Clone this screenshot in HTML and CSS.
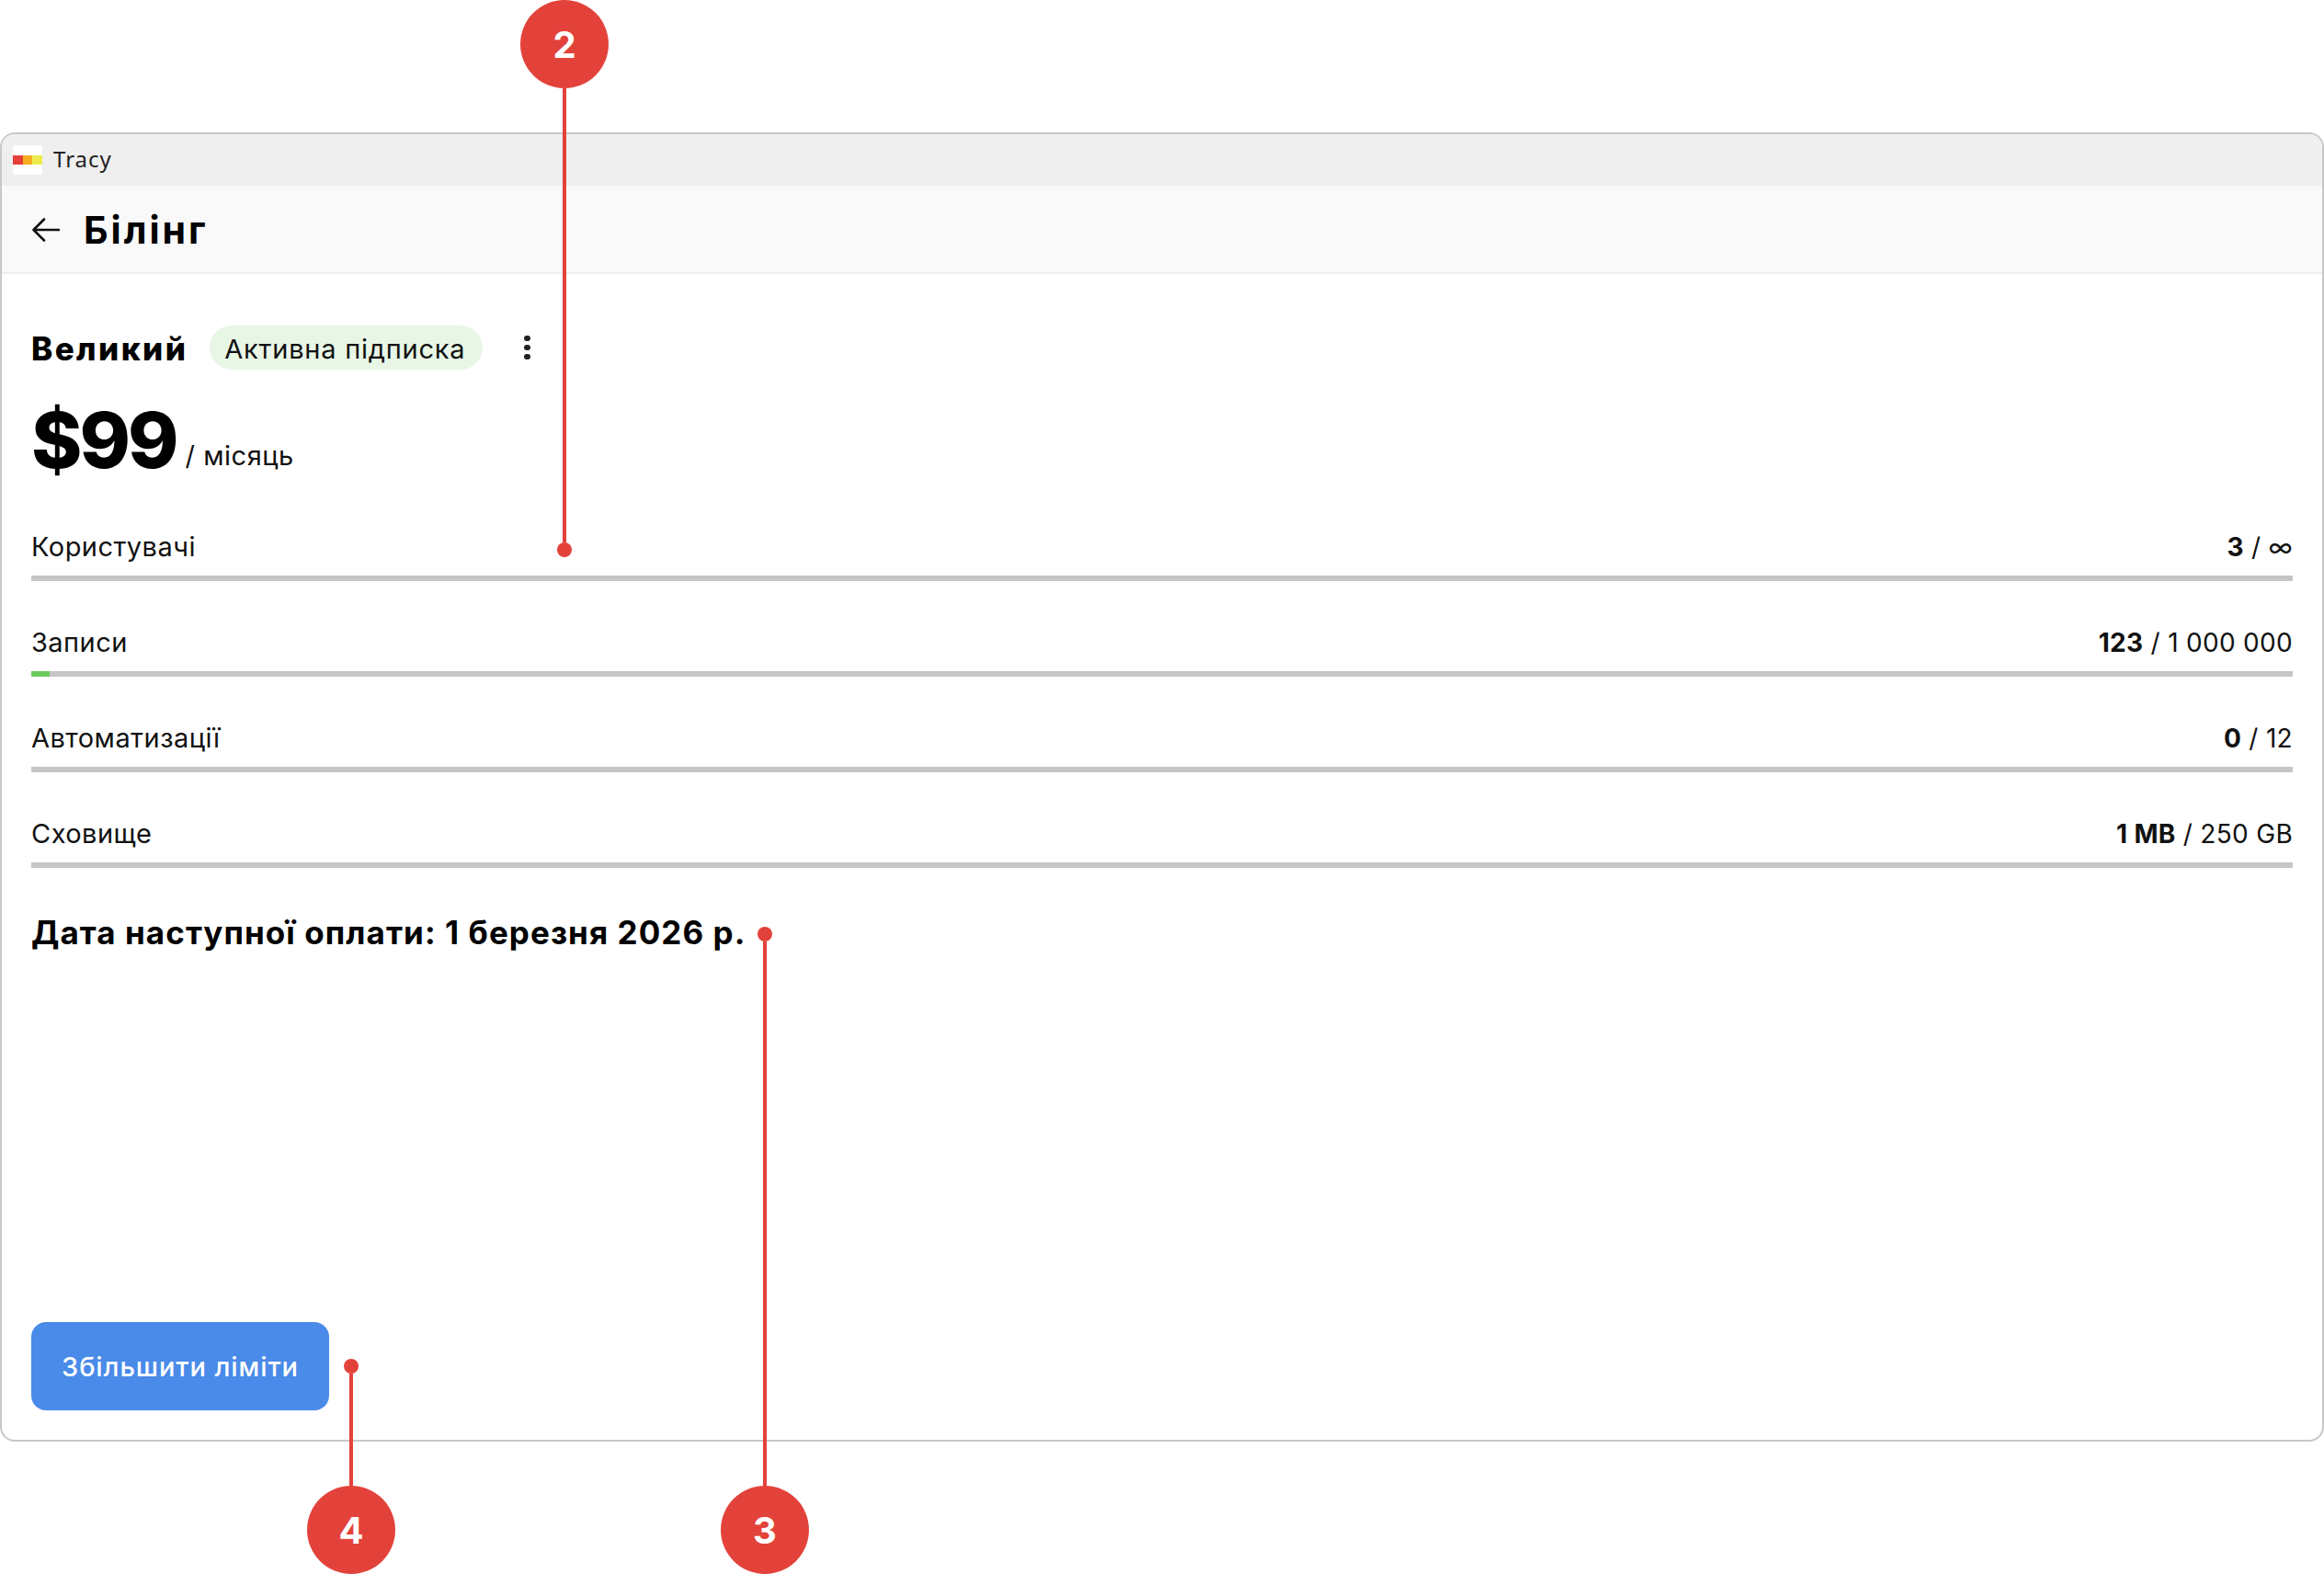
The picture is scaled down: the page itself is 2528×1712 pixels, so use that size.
FILE: index.html
```html
<!DOCTYPE html>
<html lang="uk">
<head>
<meta charset="utf-8">
<title>Tracy — Білінг</title>
<link rel="stylesheet" href="styles.css">
</head>
<body>
<div class="stage">
  <main class="window">
    <div class="titlebar">
      <div class="logo"><i class="s-red"></i><i class="s-orange"></i><i class="s-yellow"></i></div>
      <span class="app-name">Tracy</span>
    </div>
    <header class="header">
      <svg class="back" width="30" height="26" viewBox="0 0 30 26" fill="none" stroke="#111" stroke-width="2.6" stroke-linecap="round" stroke-linejoin="round"><path d="M29 13H2M13 1.5 1.5 13 13 24.5"/></svg>
      <h1 class="page-title">Білінг</h1>
    </header>
    <section class="content">
      <div class="plan-row">
        <h2 class="plan-name">Великий</h2>
        <span class="badge">Активна підписка</span>
        <div class="kebab"><i></i><i></i><i></i></div>
      </div>
      <div class="price-row">
        <span class="price">$99</span>
        <span class="period">/ місяць</span>
      </div>
      <div class="usage">
        <div class="usage-row">
          <div class="usage-text"><span>Користувачі</span><span class="value"><b>3</b> / ∞</span></div>
          <div class="bar"></div>
        </div>
        <div class="usage-row">
          <div class="usage-text"><span>Записи</span><span class="value"><b>123</b> / 1 000 000</span></div>
          <div class="bar"><div class="fill" style="width:20px"></div></div>
        </div>
        <div class="usage-row">
          <div class="usage-text"><span>Автоматизації</span><span class="value"><b>0</b> / 12</span></div>
          <div class="bar"></div>
        </div>
        <div class="usage-row">
          <div class="usage-text"><span>Сховище</span><span class="value"><b>1 MB</b> / 250 GB</span></div>
          <div class="bar"></div>
        </div>
      </div>
      <p class="next-pay">Дата наступної оплати: 1 березня 2026 р.</p>
      <button class="cta">Збільшити ліміти</button>
    </section>
  </main>

  <div class="callout c2"><span class="bubble">2</span><i class="line"></i><i class="dot"></i></div>
  <div class="callout c3"><i class="dot"></i><i class="line"></i><span class="bubble">3</span></div>
  <div class="callout c4"><i class="dot"></i><i class="line"></i><span class="bubble">4</span></div>
</div>
</body>
</html>
```

FILE: styles.css
```css
* { box-sizing: border-box; }
html, body { margin: 0; padding: 0; background: #fff; }
body { font-family: Inter, "Noto Sans", sans-serif; color: #000; }

.stage {
  position: relative;
  width: 2528px;
  height: 1712px;
  padding-top: 144px;
  overflow: hidden;
}

.window {
  display: flex;
  flex-direction: column;
  height: 1424px;
  border: 2px solid #c8c8c8;
  border-radius: 16px;
  overflow: hidden;
  background: #fff;
}

.titlebar {
  display: flex;
  align-items: center;
  gap: 12px;
  height: 56px;
  padding-left: 12px;
  background: #efefef;
  flex: none;
}
.logo {
  display: flex;
  align-items: center;
  width: 32px;
  height: 32px;
  background: #fff;
  border-radius: 2px;
}
.logo i { display: block; flex: 1; height: 10px; }
.s-red { background: #e5403a; }
.s-orange { background: #f5ae20; }
.s-yellow { background: #ebeb4f; }
.app-name {
  font-family: "Noto Sans", sans-serif;
  font-size: 24px;
  line-height: 28px;
  letter-spacing: 1px;
  color: #222;
  margin-top: -2px;
}

.header {
  display: flex;
  align-items: center;
  gap: 26px;
  height: 96px;
  flex: none;
  padding: 2px 0 0 33px;
  background: #f9f9f9;
  border-bottom: 2px solid #efefef;
}
.page-title {
  margin: 0;
  font-size: 41px;
  font-weight: 700;
  line-height: 1;
  letter-spacing: 3px;
}

.content {
  flex: 1;
  display: flex;
  flex-direction: column;
  align-items: stretch;
  padding: 56px 32px 32px;
}

.plan-row { display: flex; align-items: center; height: 48px; }
.plan-name {
  margin: 2px 0 0;
  font-size: 35px;
  font-weight: 800;
  letter-spacing: 2.4px;
  line-height: 1;
}
.badge {
  margin-left: 24px;
  display: flex;
  align-items: center;
  height: 48px;
  padding: 2px 19px 0 16px;
  border-radius: 24px;
  background: #e8f6e6;
  font-size: 29px;
  letter-spacing: 0.75px;
  color: #111;
}
.kebab {
  margin-left: 45px;
  display: flex;
  flex-direction: column;
  gap: 3.5px;
}
.kebab i { display: block; width: 6.4px; height: 6.4px; border-radius: 50%; background: #222; }

.price-row {
  display: flex;
  align-items: baseline;
  gap: 10px;
  margin-top: 27px;
  height: 100px;
}
.price { font-size: 84px; font-weight: 800; line-height: 100px; letter-spacing: -3px; }
.period { font-size: 29px; letter-spacing: 0.5px; color: #111; position: relative; top: -3px; }

.usage { display: flex; flex-direction: column; gap: 50px; margin-top: 49px; }
.usage-row { display: flex; flex-direction: column; gap: 14px; }
.usage-text {
  display: flex;
  justify-content: space-between;
  align-items: baseline;
  font-size: 29px;
  line-height: 34px;
  letter-spacing: 0.45px;
  color: #111;
}
.value { font-size: 28px; letter-spacing: 0.3px; }
.value b { font-weight: 700; }
.bar { height: 6px; background: #c6c6c6; }
.fill { height: 6px; background: #6cc95f; }

.next-pay {
  margin: 49px 0 0;
  font-size: 35px;
  font-weight: 700;
  line-height: 42px;
  letter-spacing: 1.06px;
}

.cta {
  margin-top: auto;
  align-self: flex-start;
  width: 324px;
  height: 96px;
  border: 0;
  border-radius: 16px;
  background: #4a8ae8;
  color: #fff;
  font-family: inherit;
  font-size: 29px;
  font-weight: 500;
  letter-spacing: 0.9px;
}

.callout {
  position: absolute;
  width: 96px;
  display: flex;
  flex-direction: column;
  align-items: center;
}
.c2 { left: 566px; top: 0; }
.c3 { left: 784px; top: 1008px; }
.c4 { left: 334px; top: 1478px; }
.bubble {
  flex: none;
  width: 96px;
  height: 96px;
  border-radius: 50%;
  background: #e3423a;
  color: #fff;
  display: flex;
  align-items: center;
  justify-content: center;
  font-size: 40px;
  font-weight: 700;
}
.line { display: block; width: 4px; background: #e3423a; flex: none; }
.dot { display: block; width: 16px; height: 16px; border-radius: 50%; background: #e3423a; flex: none; }
.c2 .line { height: 494px; }
.c3 .line { height: 592px; }
.c4 .line { height: 122px; }
```
